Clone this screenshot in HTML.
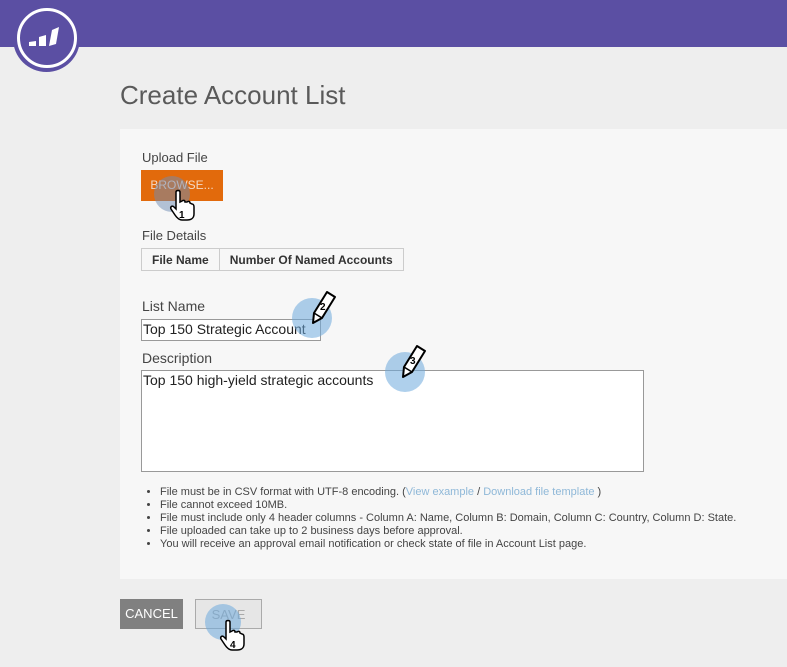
<!DOCTYPE html>
<html><head><style>
body{margin:0;width:787px;height:667px;background:#eeeeee;font-family:"Liberation Sans",sans-serif;position:relative;overflow:hidden;color:#444}
.hdr{position:absolute;left:0;top:0;width:787px;height:47px;background:#5b4fa3}
.logo{position:absolute;left:13px;top:5px;width:67px;height:67px;border-radius:50%;background:#5b4fa3}
.logo .ring{position:absolute;left:4px;top:3px;width:54px;height:54px;border:3px solid #fff;border-radius:50%}
h1{position:absolute;left:120px;top:80px;margin:0;font-weight:normal;font-size:26px;color:#5a5a5a}
.panel{position:absolute;left:120px;top:129px;width:667px;height:450px;background:#f7f7f7}
.a{position:absolute;font-size:13px;color:#444}
.browse{position:absolute;left:141px;top:170px;width:82px;height:31px;background:#e26a0c;color:#f3d8c4;font-size:12px;line-height:31px;text-align:center}
table{position:absolute;left:141px;top:248px;border-collapse:collapse;font-size:12px;font-weight:bold;color:#333}
td{border:1px solid #ccc;padding:0 10px;height:21px;background:#f7f7f7}
.inp{position:absolute;background:#fff;border:1px solid #999;font-size:14px;color:#222;box-sizing:border-box;padding:1px 1px}
ul{position:absolute;left:140px;top:486px;margin:0;padding-left:20px;font-size:11px;line-height:13px;color:#444}
a{color:#8fb8d8;text-decoration:none}
.btn{position:absolute;top:599px;height:30px;line-height:30px;font-size:13px;text-align:center;box-sizing:border-box}
.blob{position:absolute;border-radius:50%;background:rgba(110,170,220,.55)}
.num{position:absolute;font-size:10px;font-weight:bold;color:#000}
svg.c{position:absolute;overflow:visible}
</style></head><body>
<div class="hdr"></div>
<div class="logo"><div class="ring"></div>
<svg style="position:absolute;left:14px;top:21px" width="40" height="26" viewBox="0 0 40 26"><polygon points="2,20 9,20 9,15 2,16" fill="#fff"/><polygon points="12,20 19,20 19,9 12,11" fill="#fff"/><polygon points="22,20 29,18 32,1 25,4" fill="#fff"/></svg></div>
<h1>Create Account List</h1>
<div class="panel"></div>
<div class="a" style="left:142px;top:150px">Upload File</div>
<div class="browse">BROWSE...</div>
<div class="blob" style="left:154px;top:176px;width:36px;height:36px;background:rgba(110,140,180,.5)"></div>
<svg class="c" style="left:170px;top:190px" width="26" height="32" viewBox="0 0 26 32"><path d="M6 2 C6 0 10 0 10 2 L10 12 L12 11 C13 10 15 10 15 12 L17 12 C18 11 20 11 20 13 L22 14 C23 14 24 15 24 17 L24 24 C24 28 21 30 17 30 L12 30 C9 30 7 28 5 25 L1 19 C0 17 2 15 4 17 L6 19 Z" fill="#fff" stroke="#000" stroke-width="1.5"/><text x="9" y="28" font-size="10" font-weight="bold" font-family="Liberation Sans">1</text></svg>
<div class="a" style="left:142px;top:228px">File Details</div>
<table><tr><td>File Name</td><td>Number Of Named Accounts</td></tr></table>
<div class="a" style="left:142px;top:298px;font-size:14px">List Name</div>
<div class="inp" style="left:141px;top:319px;width:180px;height:22px">Top 150 Strategic Account</div>
<div class="blob" style="left:292px;top:298px;width:40px;height:40px"></div>
<svg class="c" style="left:310px;top:290px" width="28" height="34" viewBox="0 0 28 34"><path d="M17 2 L25 7 L12 28 L3 33 L4 23 Z" fill="#fff" stroke="#000" stroke-width="2" stroke-linejoin="round"/><path d="M4 23 L12 28" stroke="#000" stroke-width="1.5"/><text x="10" y="20" font-size="10" font-weight="bold" font-family="Liberation Sans">2</text></svg>
<div class="a" style="left:142px;top:350px;font-size:14px">Description</div>
<div class="inp" style="left:141px;top:370px;width:503px;height:102px">Top 150 high-yield strategic accounts</div>
<div class="blob" style="left:385px;top:352px;width:40px;height:40px"></div>
<svg class="c" style="left:400px;top:344px" width="28" height="34" viewBox="0 0 28 34"><path d="M17 2 L25 7 L12 28 L3 33 L4 23 Z" fill="#fff" stroke="#000" stroke-width="2" stroke-linejoin="round"/><path d="M4 23 L12 28" stroke="#000" stroke-width="1.5"/><text x="10" y="20" font-size="10" font-weight="bold" font-family="Liberation Sans">3</text></svg>
<ul>
<li>File must be in CSV format with UTF-8 encoding. (<a>View example</a> / <a>Download file template</a> )</li>
<li>File cannot exceed 10MB.</li>
<li>File must include only 4 header columns - Column A: Name, Column B: Domain, Column C: Country, Column D: State.</li>
<li>File uploaded can take up to 2 business days before approval.</li>
<li>You will receive an approval email notification or check state of file in Account List page.</li>
</ul>
<div class="btn" style="left:120px;width:63px;background:#808080;color:#fff">CANCEL</div>
<div class="btn" style="left:195px;width:67px;border:1px solid #aaa;background:#e6e6e6;color:#aaa">SAVE</div>
<div class="blob" style="left:205px;top:604px;width:36px;height:36px"></div>
<svg class="c" style="left:220px;top:620px" width="26" height="32" viewBox="0 0 26 32"><path d="M6 2 C6 0 10 0 10 2 L10 12 L12 11 C13 10 15 10 15 12 L17 12 C18 11 20 11 20 13 L22 14 C23 14 24 15 24 17 L24 24 C24 28 21 30 17 30 L12 30 C9 30 7 28 5 25 L1 19 C0 17 2 15 4 17 L6 19 Z" fill="#fff" stroke="#000" stroke-width="1.5"/><text x="10" y="28" font-size="10" font-weight="bold" font-family="Liberation Sans">4</text></svg>
</body></html>
